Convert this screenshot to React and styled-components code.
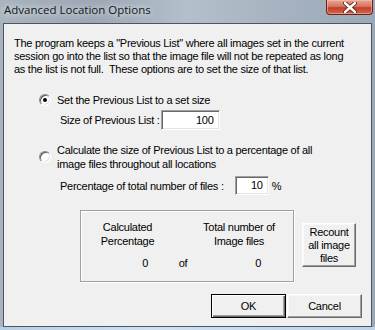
import React from "react";
import styled, { createGlobalStyle, css } from "styled-components";

const Global = createGlobalStyle`
  html, body { margin: 0; padding: 0; }
  body { width: 375px; height: 330px; overflow: hidden; background: #c5d7ea; }
  #root { width: 375px; height: 330px; }
`;

const Win = styled.div`
  width: 375px;
  height: 330px;
  display: flex;
  flex-direction: column;
  background: linear-gradient(90deg, #a9b4bf 0%, #9ba7b3 25%, #b3bfcb 50%, #a6b2bf 75%, #9aa9b8 100%);
  font-family: "Liberation Sans", Arial, sans-serif;
  font-size: 11px;
  letter-spacing: -0.27px;
  color: #000;
`;

const TitleBar = styled.div`
  height: 23px;
  display: flex;
  align-items: flex-start;
  flex-shrink: 0;
`;

const Title = styled.div`
  font-family: "Open Sans", "Noto Sans", sans-serif;
  font-size: 11.5px;
  letter-spacing: 0;
  line-height: 20px;
  padding-left: 4px;
  color: #101820;
  text-shadow: 0 0 6px rgba(255, 255, 255, 0.8), 0 0 10px rgba(255, 255, 255, 0.6);
`;

const Close = styled.div`
  margin-left: auto;
  margin-right: 2px;
  width: 47px;
  height: 15px;
  box-sizing: border-box;
  border: 1px solid #6b2319;
  border-top: none;
  border-radius: 0 0 4px 4px;
  background: linear-gradient(180deg, #e8a596 0%, #d5775f 45%, #c2402a 55%, #d3664a 100%);
  box-shadow: inset 0 0 0 1px rgba(255, 200, 190, 0.5);
  display: flex;
  align-items: center;
  justify-content: center;
`;

const Client = styled.div`
  flex: 1;
  margin: 0 3px;
  border: 1px solid #4f5560;
  background: #f0f0f0;
  display: flex;
  flex-direction: column;
`;

const BottomFrame = styled.div`
  height: 3px;
  flex-shrink: 0;
  background: linear-gradient(90deg, #b7cde4, #cfe0f2 40%, #bdd3ea);
`;

const Para = styled.p`
  margin: 13px 0 0 10px;
  line-height: 13px;
`;

const Options = styled.div`
  margin: 17px 0 0 35px;
  display: flex;
  flex-direction: column;
`;

const RadioRow = styled.div`
  display: flex;
  align-items: center;
  gap: 6px;
  margin-top: ${(p) => p.$mt || 0}px;
`;

const Radio = styled.span`
  position: relative;
  width: 12px;
  height: 12px;
  box-sizing: border-box;
  border-radius: 50%;
  border: 1px solid;
  border-color: #8a8a8a #ffffff #ffffff #8a8a8a;
  background: #fff;
  box-shadow: inset 1px 1px 0 #5a5a5a, inset -1px -1px 0 #e3e3e3;
  flex-shrink: 0;
  ${(p) =>
    p.$checked &&
    css`
      &::after {
        content: "";
        position: absolute;
        left: 3px;
        top: 3px;
        width: 4px;
        height: 4px;
        border-radius: 50%;
        background: #000;
      }
    `}
`;

const RadioLabel = styled.span`
  line-height: 14px;
`;

const FieldRow = styled.div`
  display: flex;
  align-items: center;
  margin: ${(p) => p.$mt || 0}px 0 0 21px;
`;

const FieldLabel = styled.span`
  margin-right: ${(p) => p.$gap}px;
`;

const Input = styled.div`
  width: ${(p) => p.$w}px;
  height: ${(p) => p.$h}px;
  box-sizing: border-box;
  background: #fff;
  border: 1px solid;
  border-color: #a0a0a0 #ffffff #ffffff #a0a0a0;
  box-shadow: inset 1px 1px 0 #696969, inset -1px -1px 0 #e3e3e3;
  text-align: right;
  padding-right: 5px;
  line-height: ${(p) => p.$h - 2}px;
`;

const Unit = styled.span`
  margin-left: 3px;
`;

const CalcRow = styled.div`
  display: flex;
  align-items: flex-start;
  margin: 15px 0 0 76px;
  gap: 8px;
`;

const Group = styled.div`
  width: 214px;
  height: 72px;
  box-sizing: border-box;
  border: 1px solid #a0a0a0;
  box-shadow: 1px 1px 0 #fff, inset 1px 1px 0 #fff;
  display: flex;
  flex-direction: column;
`;

const HeadRow = styled.div`
  display: grid;
  grid-template-columns: 93px 110px;
  column-gap: 10px;
  margin-top: 10px;
  text-align: center;
  line-height: 13.5px;
`;

const ValueRow = styled.div`
  display: grid;
  grid-template-columns: 67px 70px 43px;
  margin-top: 9px;
  line-height: 13px;
`;

const Val = styled.span`
  text-align: ${(p) => p.$align};
`;

const Btn = styled.button`
  font-family: inherit;
  font-size: 11px;
  letter-spacing: inherit;
  color: #000;
  padding: 0;
  background: #f0f0f0;
  width: ${(p) => p.$w}px;
  height: ${(p) => p.$h}px;
  box-sizing: border-box;
  line-height: 13px;
  border: 1px solid;
  border-color: #ffffff #696969 #696969 #ffffff;
  box-shadow: inset -1px -1px 0 #a0a0a0, inset 1px 1px 0 #f8f8f8;
  ${(p) =>
    p.$default &&
    css`
      border-color: #000;
      box-shadow: inset 1px 1px 0 #fff, inset -1px -1px 0 #696969, inset -2px -2px 0 #a0a0a0;
    `}
`;

const RecountBtn = styled(Btn)`
  margin-top: 13px;
`;

const Footer = styled.div`
  display: flex;
  justify-content: flex-end;
  gap: 1px;
  margin: 12px 9px 0 0;
`;

export default function App() {
  return (
    <>
      <Global />
      <Win>
        <TitleBar>
          <Title>Advanced Location Options</Title>
          <Close>
            <svg width="14" height="11" viewBox="0 0 14 11">
              <path
                d="M2 1 L12 10 M12 1 L2 10"
                stroke="#5a1a12"
                strokeWidth="4.2"
                strokeLinecap="round"
              />
              <path
                d="M2 1 L12 10 M12 1 L2 10"
                stroke="#ffffff"
                strokeWidth="2.4"
                strokeLinecap="round"
              />
            </svg>
          </Close>
        </TitleBar>
        <Client>
          <Para>
            The program keeps a "Previous List" where all images set in the current
            <br />
            session go into the list so that the image file will not be repeated as long
            <br />
            as the list is not full.&nbsp; These options are to set the size of that list.
          </Para>
          <Options>
            <RadioRow>
              <Radio $checked />
              <RadioLabel>Set the Previous List to a set size</RadioLabel>
            </RadioRow>
            <FieldRow $mt={3}>
              <FieldLabel $gap={1}>Size of Previous List :</FieldLabel>
              <Input $w={59} $h={20}>100</Input>
            </FieldRow>
            <RadioRow $mt={13}>
              <Radio />
              <RadioLabel>
                Calculate the size of Previous List to a percentage of all
                <br />
                image files throughout all locations
              </RadioLabel>
            </RadioRow>
            <FieldRow $mt={5}>
              <FieldLabel $gap={11}>Percentage of total number of files :</FieldLabel>
              <Input $w={34} $h={19}>10</Input>
              <Unit>%</Unit>
            </FieldRow>
          </Options>
          <CalcRow>
            <Group>
              <HeadRow>
                <span>
                  Calculated
                  <br />
                  Percentage
                </span>
                <span>
                  Total number of
                  <br />
                  Image files
                </span>
              </HeadRow>
              <ValueRow>
                <Val $align="right">0</Val>
                <Val $align="center">of</Val>
                <Val $align="right">0</Val>
              </ValueRow>
            </Group>
            <RecountBtn $w={54} $h={44}>
              Recount
              <br />
              all image
              <br />
              files
            </RecountBtn>
          </CalcRow>
          <Footer>
            <Btn $default $w={75} $h={24}>OK</Btn>
            <Btn $w={75} $h={24}>Cancel</Btn>
          </Footer>
        </Client>
        <BottomFrame />
      </Win>
    </>
  );
}
